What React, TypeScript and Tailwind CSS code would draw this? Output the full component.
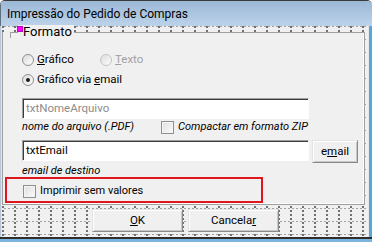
const font = "font-['Roboto','Noto_Sans',sans-serif]";

const grid =
  "bg-[#f0f0f0] bg-[image:radial-gradient(circle_at_1px_1px,#707070_0.8px,transparent_1.2px),linear-gradient(to_right,#f0f0f0_2px,transparent_2px),linear-gradient(to_bottom,#a0a0a0_1px,transparent_1px)] bg-[length:12px_4px,4px_13px,4px_13px]";

function Radio({ checked = false, disabled = false }: { checked?: boolean; disabled?: boolean }) {
  return (
    <span
      className={`flex h-[12px] w-[12px] shrink-0 items-center justify-center rounded-full border bg-linear-to-br from-[#dcdcdc] to-[#fdfdfd] ${
        disabled ? "border-[#c4c4c4]" : "border-[#8e8f8f]"
      }`}
    >
      {checked && <span className="h-[4px] w-[4px] rounded-full bg-[#1a1a1a]" />}
    </span>
  );
}

function Check() {
  return (
    <span className="block h-[13px] w-[13px] shrink-0 border border-[#8e8f8f] bg-linear-to-br from-[#dedede] to-[#fbfbfb] shadow-[inset_0_0_0_1px_#f4f4f4]" />
  );
}

function Field({ value, dim = false }: { value: string; dim?: boolean }) {
  return (
    <div
      className={`flex h-[21px] w-[287px] items-center border border-t-[#a0a0a0] border-l-[#a0a0a0] border-r-white border-b-white bg-white pl-[3px] text-[11.5px] shadow-[inset_1px_1px_0_#3c3c3c] ${
        dim ? "text-[#8d8d8d]" : "text-black"
      }`}
    >
      {value}
    </div>
  );
}

function Button({ children, w }: { children: React.ReactNode; w: string }) {
  return (
    <div
      className={`flex h-[23px] ${w} items-center justify-center border border-t-[#e3e3e3] border-l-[#e3e3e3] border-r-[#8a8a8a] border-b-[#8a8a8a] bg-[#f0f0f0] text-[11.5px] text-black shadow-[inset_1px_1px_0_#ffffff,inset_-1px_-1px_0_#c8c8c8]`}
    >
      {children}
    </div>
  );
}

export default function App() {
  return (
    <div className={`${font} flex h-[242px] w-[372px] flex-col overflow-hidden rounded-t-[5px] border-t border-[#3a3a3a] bg-[#f0f0f0]`}>
      {/* title bar */}
      <div className="flex h-[25px] shrink-0 items-center border-l border-[#5f6f80] bg-linear-to-b from-[#9cb8d6] to-[#bcd3ea] pl-[6px] pt-px text-[12px] text-black">
        Impressão do Pedido de Compras
      </div>

      <div className="flex flex-1">
        {/* left frame */}
        <div className="w-[2px] shrink-0 border-l border-[#b9c8d8] bg-[#e4e4e4]" />

        <div className={`flex w-[366px] flex-col ${grid}`}>
          <div className="h-[6px] shrink-0" />

          {/* panel */}
          <div className="relative flex h-[173px] w-[363px] flex-col border-l border-b border-r border-[#a0a0a0] bg-[#f0f0f0] shadow-[inset_-1px_-1px_0_#ffffff]">
            <div className="ml-[7px] h-px shrink-0 bg-[#a0a0a0]" />
            <div className="ml-[7px] h-[5px] w-px bg-[#a0a0a0]" />

            {/* legend */}
            <div className="absolute left-[15px] top-[-7px] flex items-start bg-[#f0f0f0] pr-[2px] text-[13px] leading-[14px] text-black">
              <span className="mt-[2px] mr-[1px] h-[4px] w-[4px] bg-[#ff00ff] shadow-[0_0_0_1px_#c000c0]" />
              Formato
            </div>

            <div className="ml-[19px] mt-[16px] flex h-[12px] items-center text-[11.5px] text-black">
              <Radio />
              <span className="ml-[3px] w-[63px]">
                <span className="underline">G</span>ráfico
              </span>
              <Radio disabled />
              <span className="ml-[3px] text-[#a0a0a0]">
                <span className="underline">T</span>exto
              </span>
            </div>

            <div className="ml-[19px] mt-[8px] flex h-[12px] items-center text-[11.5px] text-black">
              <Radio checked />
              <span className="ml-[3px]">
                Gráfico via <span className="underline">e</span>mail
              </span>
            </div>

            <div className="ml-[19px] mt-[12px]">
              <Field value="txtNomeArquivo" dim />
            </div>

            <div className="ml-[19px] mt-[2px] flex h-[13px] items-center text-[11px] italic text-black">
              <span className="w-[139px]">nome do arquivo (.PDF)</span>
              <Check />
              <span className="ml-[4px]">Compactar em formato ZIP</span>
            </div>

            <div className="ml-[19px] mt-[6px] flex h-[23px] items-start gap-[3px]">
              <Field value="txtEmail" />
              <Button w="w-[46px]">
                <span>
                  e<span className="underline">m</span>ail
                </span>
              </Button>
            </div>

            <div className="ml-[19px] mt-[2px] flex h-[12px] items-center text-[11px] italic text-black">
              email de destino
            </div>

            <div className="ml-[2px] flex h-[26px] w-[258px] items-center border-2 border-[#e0151d] pl-[16px] pt-[3px] text-[11px] text-black">
              <Check />
              <span className="ml-[4px]">Imprimir sem valores</span>
            </div>
          </div>

          {/* buttons */}
          <div className="flex h-[32px] shrink-0 items-start gap-[5px] pl-[90px] pt-[4px]">
            <Button w="w-[91px]">
              <span>
                <span className="underline">O</span>K
              </span>
            </Button>
            <Button w="w-[91px]">
              <span>
                Cancela<span className="underline">r</span>
              </span>
            </Button>
          </div>
        </div>

        {/* right frame */}
        <div className="w-[4px] shrink-0 border-l border-[#e8e8e8] bg-[#57a6d8]" />
      </div>

      {/* bottom frame */}
      <div className="h-[5px] shrink-0 border-t-2 border-[#2e2e2e] bg-[#79b5de]" />
    </div>
  );
}
